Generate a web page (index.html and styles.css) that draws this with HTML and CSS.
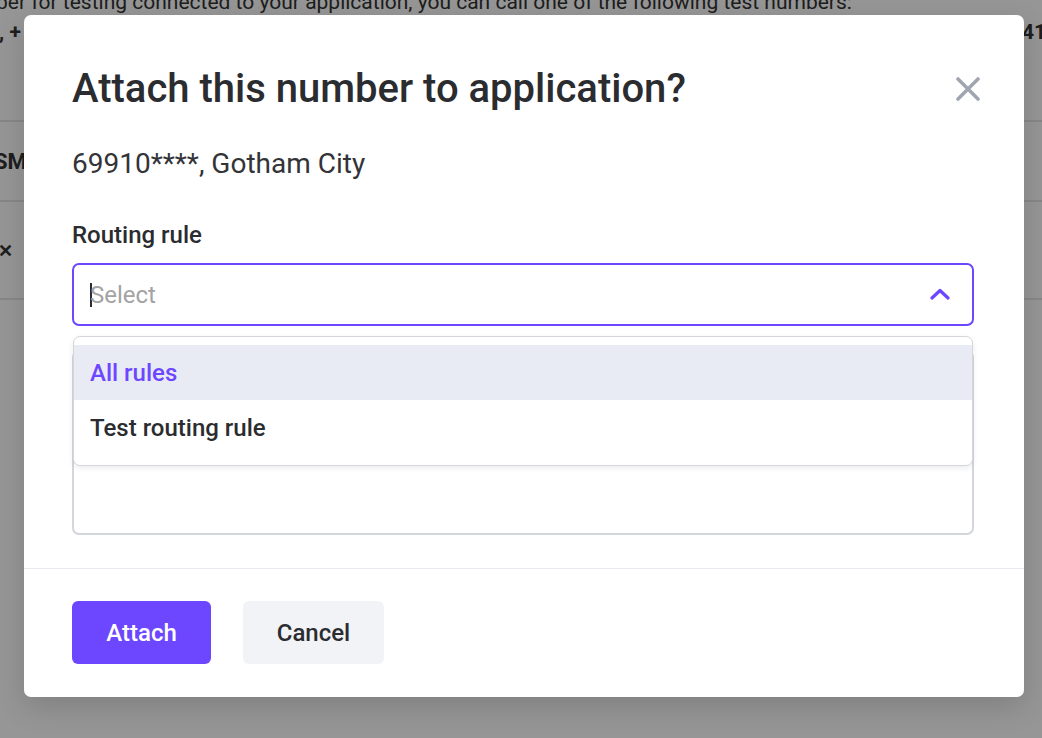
FILE: index.html
```html
<!DOCTYPE html>
<html lang="en">
<head>
<meta charset="utf-8">
<title>Attach number</title>
<link rel="stylesheet" href="styles.css">
</head>
<body>
<div class="page">
  <p class="page-intro">ber for testing connected to your application, you can call one of the following test numbers:</p>
  <div class="page-numbers"><span>, +</span><span>41</span></div>
  <div class="page-table">
    <div class="page-row"><span class="page-cell">SM</span></div>
    <div class="page-row page-row-tall"><span class="page-cell page-x">&#x2715;</span></div>
  </div>
</div>
<div class="overlay"></div>

<div class="modal" role="dialog" aria-labelledby="modal-title">
  <div class="modal-body">
    <div class="modal-head">
      <h2 id="modal-title" class="modal-title">Attach this number to application?</h2>
      <button class="modal-close" aria-label="Close">
        <svg viewBox="0 0 24 24" width="24" height="24"><path d="M2 2 L22 22 M22 2 L2 22" stroke="#a0a6b0" stroke-width="3.6" stroke-linecap="round" fill="none"/></svg>
      </button>
    </div>
    <p class="modal-sub">69910****, Gotham City</p>
    <label class="field-label">Routing rule</label>
    <div class="select-wrap">
      <div class="select">
        <span class="caret"></span><span class="placeholder">Select</span>
        <svg class="chevron" viewBox="0 0 20 12" width="20" height="12"><path d="M2 10 L10 2.5 L18 10" stroke="#6c47ff" stroke-width="3.2" stroke-linecap="round" stroke-linejoin="round" fill="none"/></svg>
      </div>
      <ul class="dropdown">
        <li class="option option-active">All rules</li>
        <li class="option">Test routing rule</li>
      </ul>
    </div>
    <div class="textarea"></div>
  </div>
  <div class="modal-foot">
    <button class="btn btn-primary">Attach</button>
    <button class="btn btn-secondary">Cancel</button>
  </div>
</div>
</body>
</html>
```

FILE: styles.css
```css
* { box-sizing: border-box; }
html, body { margin: 0; padding: 0; }
body {
  width: 1042px;
  height: 738px;
  overflow: hidden;
  font-family: Roboto, "Liberation Sans", Arial, sans-serif;
  background: #fff;
  position: relative;
}

/* underlying page */
.page { color: #333; font-size: 21px; }
.page-intro {
  margin: -10px 0 0 -4px;
  line-height: 24px;
  white-space: nowrap;
}
.page-numbers {
  display: flex;
  justify-content: space-between;
  font-weight: 700;
  line-height: 24px;
  margin-top: 6px;
}
.page-numbers span:first-child { margin-left: -1px; }
.page-numbers span:last-child { margin-right: -4px; }
.page-table { margin-top: 76px; border-top: 2px solid #e6e6e6; }
.page-row {
  height: 80px;
  border-bottom: 2px solid #e6e6e6;
  display: flex;
  align-items: center;
}
.page-row-tall { height: 98px; }
.page-cell { font-weight: 700; margin-left: -6px; font-size: 22px; }
.page-x { margin-left: -2px; font-size: 18px; }

.overlay {
  position: absolute;
  inset: 0;
  background: rgba(0, 0, 0, 0.41);
}

/* modal */
.modal {
  position: absolute;
  left: 24px;
  top: 15px;
  width: 1000px;
  height: 682px;
  background: #fff;
  border-radius: 7px;
  box-shadow: 0 10px 30px rgba(0, 0, 0, 0.15);
  display: flex;
  flex-direction: column;
  color: #2b2c30;
}
.modal-body {
  padding: 50px 50px 33px 48px;
  border-bottom: 1px solid #e7eaee;
}
.modal-head {
  display: flex;
  justify-content: space-between;
  align-items: center;
}
.modal-title {
  margin: 0;
  font-size: 40px;
  line-height: 48px;
  font-weight: 500;
  color: #2b2c30;
}
.modal-close {
  border: 0;
  background: none;
  padding: 0;
  width: 24px;
  height: 24px;
  margin-right: -6px;
  display: flex;
}
.modal-sub {
  margin: 33px 0 0;
  font-size: 28px;
  line-height: 36px;
  color: #333438;
}
.field-label {
  display: block;
  margin-top: 37px;
  font-size: 24px;
  line-height: 32px;
  font-weight: 500;
  color: #2b2c30;
}
.select-wrap { position: relative; margin-top: 12px; }
.select {
  height: 63px;
  border: 2px solid #6c47ff;
  border-radius: 7px;
  display: flex;
  align-items: center;
  padding: 0 22px 0 16px;
  background: #fff;
}
.caret {
  width: 2px;
  height: 24px;
  background: #2b2c30;
  margin-right: -2px;
}
.placeholder {
  flex: 1;
  font-size: 24px;
  color: #a3a3a3;
}
.chevron { margin-top: -2px; }

.dropdown {
  position: absolute;
  top: 73px;
  left: 1px;
  right: 1px;
  margin: 0;
  padding: 8px 0 9px;
  list-style: none;
  background: #fff;
  border: 1px solid #d3d6db;
  border-radius: 7px;
  box-shadow: 0 2px 6px rgba(0, 0, 0, 0.08);
  z-index: 2;
}
.option {
  height: 56px;
  display: flex;
  align-items: center;
  padding: 0 16px;
  font-size: 24px;
  font-weight: 500;
  color: #2b2c30;
}
.option-active {
  height: 55px;
  background: #e9ebf4;
  color: #6c47ff;
}
.textarea {
  margin-top: 24px;
  height: 185px;
  border: 2px solid #d3d6db;
  border-radius: 7px;
}

.modal-foot {
  padding: 32px 48px;
  display: flex;
  gap: 32px;
}
.btn {
  height: 63px;
  border: 0;
  border-radius: 6px;
  font-family: inherit;
  font-size: 24px;
  font-weight: 500;
}
.btn-primary {
  width: 139px;
  background: #6c47ff;
  color: #fff;
}
.btn-secondary {
  width: 141px;
  background: #f2f3f7;
  color: #2b2c30;
}
```
